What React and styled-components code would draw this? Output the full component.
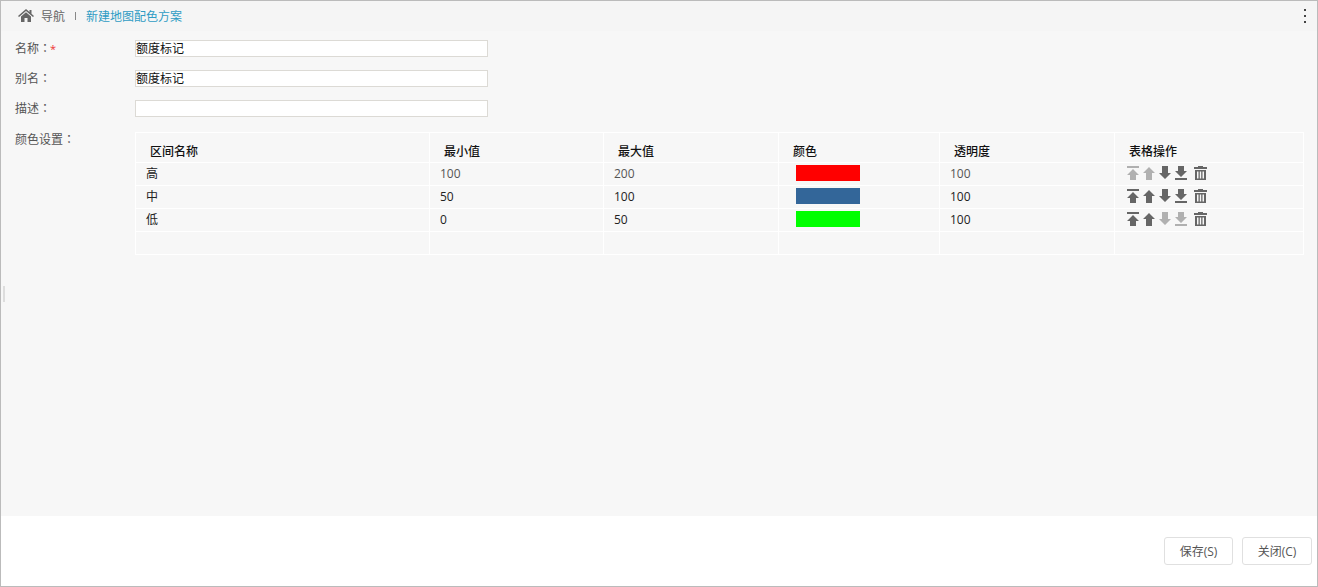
import React from 'react'
import styled, { createGlobalStyle } from 'styled-components'

const GlobalStyle = createGlobalStyle`
  html, body {
    margin: 0;
    padding: 0;
    background: #fff;
  }
  * {
    box-sizing: border-box;
  }
`

const Frame = styled.div`
  width: 1318px;
  height: 587px;
  display: flex;
  flex-direction: column;
  position: relative;
  border: 1px solid #bbb;
  font-family: "Open Sans", "Noto Sans CJK SC", sans-serif;
  font-size: 12px;
  color: #555;
`

const TopBar = styled.div`
  height: 30px;
  flex: none;
  display: flex;
  align-items: center;
  padding: 0 11px 0 17px;
  background: #f5f5f5;
`

const HomeIcon = styled.svg`
  width: 16px;
  height: 13px;
  flex: none;
  margin: -1px 1px 0 0;
  fill: #666;
`

const Crumb = styled.span`
  margin-left: 6px;
  color: #666;
`

const CrumbSep = styled.span`
  width: 1px;
  height: 8px;
  margin: 0 10px;
  background: #888;
`

const CrumbLink = styled.a`
  color: #2f9cc4;
`

const Dots = styled.div`
  margin-left: auto;
  display: flex;
  flex-direction: column;
  gap: 4px;
`

const Dot = styled.i`
  width: 2px;
  height: 2px;
  background: #444;
`

const Body = styled.div`
  flex: 1;
  padding: 9px 14px 0;
  background: #f7f7f7;
`

const FormRow = styled.div`
  display: flex;
  align-items: center;
  height: 17px;
  margin-bottom: 13px;
`

const TableRow = styled.div`
  display: flex;
  align-items: flex-start;
  margin-top: 15px;
`

const Label = styled.label`
  width: 120px;
  flex: none;
  height: 17px;
  line-height: ${p => (p.$top ? '15px' : '17px')};
`

const Colon = styled.span`
  font-family: "Noto Sans CJK TC", sans-serif;
  line-height: 0;
`

const Star = styled.span`
  margin-left: -1px;
  font-size: 11px;
  line-height: 0;
  color: #e33;
`

const TextInput = styled.input`
  width: 353px;
  height: 17px;
  padding: 0 0 2px 0;
  border: 1px solid #dcdad5;
  background: #fff;
  font: inherit;
  color: #111;
  outline: none;
`

const Table = styled.table`
  width: 1168px;
  table-layout: fixed;
  border-collapse: collapse;
`

const Col = styled.col`
  width: ${p => p.$w}px;
`

const Th = styled.th`
  height: 30px;
  padding: 6px 0 0 14px;
  border: 1px solid #fff;
  text-align: left;
  font-weight: 500;
  color: #111;
`

const Td = styled.td`
  height: 23px;
  padding: 0 0 2px ${p => p.$pad || 10}px;
  border: 1px solid #fff;
  color: ${p => (p.$muted ? '#555' : '#222')};
`

const Swatch = styled.div`
  width: 64px;
  height: 16px;
  background: ${p => p.$color};
`

const Ops = styled.div`
  display: flex;
  align-items: center;
  gap: 4px;
`

const OpIcon = styled.svg`
  width: 12px;
  height: 14px;
  flex: none;
  fill: ${p => (p.$off ? '#b0b0b0' : '#666')};
`

const TrashIcon = styled.svg`
  width: 13px;
  height: 14px;
  flex: none;
  margin-left: 3px;
  fill: #666;
`

const Footer = styled.div`
  height: 70px;
  flex: none;
  display: flex;
  justify-content: flex-end;
  gap: 9px;
  padding: 21px 5px 0 0;
  background: #fff;
`

const Button = styled.button`
  width: ${p => p.$w}px;
  height: 28px;
  padding: 0;
  border: 1px solid #e0e0e0;
  border-radius: 3px;
  background: #fff;
  font: inherit;
  color: #555;
`

const Handle = styled.div`
  position: absolute;
  left: 2px;
  top: 285px;
  width: 2px;
  height: 16px;
  background: #ddd;
`

const Op = ({ kind, off }) => (
  <OpIcon viewBox="0 0 12 14" $off={off}>
    {kind === 'top' && (
      <>
        <rect x="0" y="0" width="12" height="2" />
        <path d="M6 3 L12 9 H9 V14 H3 V9 H0 Z" />
      </>
    )}
    {kind === 'up' && <path d="M6 1 L12 7 H9 V14 H3 V7 H0 Z" />}
    {kind === 'down' && <path d="M3 0 H9 V7 H12 L6 13 L0 7 H3 Z" />}
    {kind === 'bottom' && (
      <>
        <path d="M3 0 H9 V5 H12 L6 11 L0 5 H3 Z" />
        <rect x="0" y="12" width="12" height="2" />
      </>
    )}
  </OpIcon>
)

const Trash = () => (
  <TrashIcon viewBox="0 0 13 14">
    <path d="M4 0 H9 V1 H13 V3 H0 V1 H4 Z" />
    <path fillRule="evenodd" d="M1 4 H12 V14 H1 Z M3 5.5 V12.5 H4.5 V5.5 Z M5.8 5.5 V12.5 H7.2 V5.5 Z M8.5 5.5 V12.5 H10 V5.5 Z" />
  </TrashIcon>
)

const rows = [
  { name: '高', min: 100, max: 200, color: '#ff0000', alpha: 100, muted: true, off: ['top', 'up'] },
  { name: '中', min: 50, max: 100, color: '#336699', alpha: 100, off: [] },
  { name: '低', min: 0, max: 50, color: '#00ff00', alpha: 100, off: ['down', 'bottom'] },
]

const colWidths = [294, 174, 175, 161, 175, 189]
const heads = ['区间名称', '最小值', '最大值', '颜色', '透明度', '表格操作']

export default function App() {
  return (
    <>
      <GlobalStyle />
      <Frame>
        <TopBar>
          <HomeIcon viewBox="0 0 16 13">
            <path d="M8 0 L11.5 3 V1 H13.5 V4.7 L16 7 L15 8 L8 2 L1 8 L0 7 Z" />
            <path d="M3 7.6 L8 3.2 L13 7.6 V13 H9.5 V9 H6.5 V13 H3 Z" />
          </HomeIcon>
          <Crumb>导航</Crumb>
          <CrumbSep />
          <CrumbLink>新建地图配色方案</CrumbLink>
          <Dots>
            <Dot />
            <Dot />
            <Dot />
          </Dots>
        </TopBar>
        <Body>
          <FormRow>
            <Label>名称<Colon>：</Colon><Star>*</Star></Label>
            <TextInput defaultValue="额度标记" />
          </FormRow>
          <FormRow>
            <Label>别名<Colon>：</Colon></Label>
            <TextInput defaultValue="额度标记" />
          </FormRow>
          <FormRow>
            <Label>描述<Colon>：</Colon></Label>
            <TextInput defaultValue="" />
          </FormRow>
          <TableRow>
            <Label $top>颜色设置<Colon>：</Colon></Label>
            <Table>
              <colgroup>
                {colWidths.map((w, i) => <Col key={i} $w={w} />)}
              </colgroup>
              <thead>
                <tr>
                  {heads.map(h => <Th key={h}>{h}</Th>)}
                </tr>
              </thead>
              <tbody>
                {rows.map(r => (
                  <tr key={r.name}>
                    <Td>{r.name}</Td>
                    <Td $muted={r.muted}>{r.min}</Td>
                    <Td $muted={r.muted}>{r.max}</Td>
                    <Td $pad={17}><Swatch $color={r.color} /></Td>
                    <Td $muted={r.muted}>{r.alpha}</Td>
                    <Td $pad={12}>
                      <Ops>
                        {['top', 'up', 'down', 'bottom'].map(k => (
                          <Op key={k} kind={k} off={r.off.includes(k)} />
                        ))}
                        <Trash />
                      </Ops>
                    </Td>
                  </tr>
                ))}
                <tr>
                  {heads.map(h => <Td key={h} />)}
                </tr>
              </tbody>
            </Table>
          </TableRow>
        </Body>
        <Footer>
          <Button $w={69}>保存(S)</Button>
          <Button $w={70}>关闭(C)</Button>
        </Footer>
        <Handle />
      </Frame>
    </>
  )
}
